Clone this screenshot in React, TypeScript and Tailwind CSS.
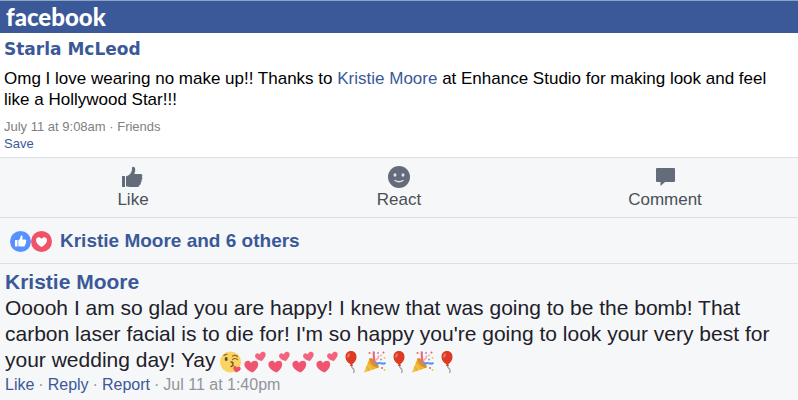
import type { ReactNode } from "react";

const actions = [
  { label: "Like", icon: LikeIcon },
  { label: "React", icon: ReactIcon },
  { label: "Comment", icon: CommentIcon },
];

const emojis = [KissEmoji, HeartsEmoji, HeartsEmoji, HeartsEmoji, HeartsEmoji, BalloonEmoji, PartyEmoji, BalloonEmoji, PartyEmoji, BalloonEmoji];

function LikeIcon() {
  return (
    <svg viewBox="0 0 22 22" className="size-[22px] fill-[#646b7b]" aria-hidden="true">
      <path d="M0 10h3v11H0z" />
      <path d="M4 10.500c4-1.500 5.500-4 6-6.500V1.500C10.500.3 13 .6 13.200 3c.1 1.800-.3 3.200-.9 5H18.500c2 0 2.400 1.700 1.300 2.900 1 1 .6 2.400-.4 2.900.7 1 .3 2.200-.7 2.700.4 1.200-.1 2.300-1.200 2.600-.1 1.200-.9 1.900-2.100 1.900H9c-2 0-3-.5-5-.8z" />
    </svg>
  );
}

function ReactIcon() {
  return (
    <svg viewBox="0 0 22 22" className="size-[22px]" aria-hidden="true">
      <circle cx="11" cy="11" r="11" fill="#646b7b" />
      <ellipse cx="7" cy="9" rx="1.500" ry="1.700" fill="#e3e5e9" />
      <ellipse cx="15" cy="9" rx="1.500" ry="1.700" fill="#e3e5e9" />
      <path d="M7 14.500q4 2.500 8 0" fill="none" stroke="#e3e5e9" strokeWidth="1.400" strokeLinecap="round" />
    </svg>
  );
}

function CommentIcon() {
  return (
    <svg viewBox="0 0 22 22" className="size-[22px] fill-[#646b7b]" aria-hidden="true">
      <path d="M3 2h17q1 0 1 1v12q0 1-1 1h-9l-4.500 4v-4H3q-1 0-1-1V3q0-1 1-1z" />
    </svg>
  );
}

function LikeBadge() {
  return (
    <svg viewBox="0 0 21 21" className="size-[21px]" aria-hidden="true">
      <circle cx="10.500" cy="10.500" r="10.500" fill="#5890ff" />
      <path d="M5 9h2.500v6.500H5zM8.300 9.300c1.300-.6 2-1.800 2.200-3.300.1-.8.4-1.500.9-1.500 1.400 0 1.500 1.800.8 3.900h3c1.300 0 1.500 1.300.7 1.900.5.600.4 1.400-.3 1.800.4.700.1 1.300-.5 1.600.1 1.200-.5 1.800-1.600 1.800H10c-.8 0-1.200-.3-1.700-.5z" fill="#fff" />
    </svg>
  );
}

function LoveBadge() {
  return (
    <svg viewBox="0 0 21 21" className="size-[21px]" aria-hidden="true">
      <circle cx="10.500" cy="10.500" r="10.500" fill="#f25268" />
      <path d="M10.500 16C7 13.800 5 11.700 5 9.200 5 6 9 5.200 10.500 8 12 5.200 16 6 16 9.200c0 2.500-2 4.600-5.500 6.800z" fill="#fff" />
    </svg>
  );
}

function Emoji({ children }: { children: ReactNode }) {
  return (
    <svg viewBox="0 0 22 22" className="mr-0.5 inline-block size-[22px] align-[-6px]" aria-hidden="true">
      {children}
    </svg>
  );
}

function KissEmoji() {
  return (
    <Emoji>
      <circle cx="10.500" cy="11" r="10.500" fill="#fbd362" />
      <ellipse cx="6.200" cy="8" rx="1.500" ry="2" fill="#5c4b2b" />
      <path d="M4 4.500q1.500-1.500 3-1M12.500 5q3-1.500 5 .5M12.500 8.500q2.500-2 5 0" fill="none" stroke="#8a6d33" strokeWidth="1.200" strokeLinecap="round" />
      <path d="M11 11q3 0 1.500 2 2 1.500-1.500 2.500" fill="none" stroke="#70572b" strokeWidth="1.400" strokeLinecap="round" />
      <path d="M16 21.500c-1.700-2-3.500-3.500-2.500-5.700 1-1.500 3-.8 3.200.7 1.500-1.500 4-1 4 1 0 2.200-2.500 3-4.700 4z" fill="#ee4c67" />
    </Emoji>
  );
}

function HeartsEmoji() {
  return (
    <Emoji>
      <path d="M8.500 21.500C4 19.500.5 17 .4 13.500c0-4 5-5 6.700-1.600 2-3.300 7.100-2.500 7.100 1.300 0 3.300-2.200 5.800-5.700 8.300z" fill="#f05470" />
      <path d="M17.800 10c-3.400-1-6.400-2.300-6.700-4.800-.3-2.800 3-3.900 4.700-1.700C16.400.3 20.700-.3 21.500 2.500c.7 2.700-1.400 5.300-3.700 7.500z" fill="#f4637c" />
    </Emoji>
  );
}

function BalloonEmoji() {
  return (
    <Emoji>
      <path d="M12 14q-1 2 1 3.500t.5 4.500" fill="none" stroke="#919aa5" strokeWidth="1.200" />
      <path d="M11 0c3.500 0 5.500 2.500 5.500 6 0 3-2 6-4.300 7.200L13 15h-3l.5-1.800C7.600 12 5.500 9 5.500 6c0-3.500 2-6 5.500-6z" fill="#dc3b25" />
      <ellipse cx="8.500" cy="4.500" rx="1.200" ry="2.200" transform="rotate(25 8.500 4.500)" fill="#ef775d" />
    </Emoji>
  );
}

function PartyEmoji() {
  return (
    <Emoji>
      <path d="M5.500 7.500 0 21.500l14.500-4.800z" fill="#f5bd38" />
      <path d="m4.200 11 5.800 7.200M2.300 15.700l3.400 4" stroke="#eda92e" strokeWidth="1.200" />
      <ellipse cx="10" cy="12" rx="2.700" ry="6.400" transform="rotate(-43 10 12)" fill="#d49133" />
      <path d="M9.500 11C11.500 7.500 8.500 4 10 .5" fill="none" stroke="#f26680" strokeWidth="2.200" />
      <path d="M11.500 13.500c3.500-4 6 1 10-1.500" fill="none" stroke="#5c95ee" strokeWidth="2.200" />
      <path d="M11 9.500q3-1 4-5" fill="none" stroke="#f99fb2" strokeWidth="1.300" />
      <g fill="#ef597b">
        <circle cx="5.500" cy="2" r="1" />
        <circle cx="19.500" cy="1.500" r="1" />
        <circle cx="18" cy="17" r="1" />
      </g>
      <g fill="#a28be8">
        <circle cx="14" cy="2" r="1" />
        <circle cx="17" cy="8.500" r="1" />
      </g>
      <g fill="#f5c34d">
        <circle cx="17" cy="4.500" r="1" />
        <circle cx="20.500" cy="7" r="1" />
        <circle cx="20.500" cy="19" r="1" />
      </g>
    </Emoji>
  );
}

export default function App() {
  return (
    <div className="min-h-screen bg-[#f6f7f9] font-['Liberation_Sans',Arial,sans-serif]">
      <header className="flex h-[33px] items-center border-t border-[#8ba4c4] bg-[#3b5998] px-1.5">
        <a href="#" className="font-[Lato,sans-serif] text-2xl leading-7 font-black text-white">
          facebook
        </a>
      </header>

      <article className="border-b border-[#dddfe2] bg-white px-1 pt-1 pb-[5px]">
        <h1 className="font-['DejaVu_Sans',sans-serif] text-[17px] leading-6 font-bold text-[#3b5998]">
          <a href="#">Starla McLeod</a>
        </h1>
        <p className="mt-[7px] text-[17px] leading-[21px] text-black">
          Omg I love wearing no make up!! Thanks to{" "}
          <a href="#" className="text-[#3b5998]">Kristie Moore</a> at Enhance Studio for making look and feel like a Hollywood Star!!!
        </p>
        <div className="mt-2 text-[13px] leading-[17px] text-[#808080]">
          July 11 at 9:08am · Friends
          <a href="#" className="block w-fit text-[#3b5998]">Save</a>
        </div>
      </article>

      <div className="grid grid-cols-3 border-b border-[#dddfe2] pt-2 pb-1.5">
        {actions.map(({ label, icon: Icon }) => (
          <button key={label} type="button" className="flex flex-col items-center gap-px text-[17px] leading-[22px] text-[#4b4f56]">
            <Icon />
            {label}
          </button>
        ))}
      </div>

      <a href="#" className="flex h-[46px] items-center border-b border-[#dddfe2] px-2.5 pt-0.5 text-[19px] font-bold text-[#3b5998]">
        <LikeBadge />
        <LoveBadge />
        <span className="ml-2">Kristie Moore and 6 others</span>
      </a>

      <section className="px-[5px] pt-[5px]">
        <h2 className="text-[21px] leading-[26px] font-bold text-[#3b5998]">
          <a href="#">Kristie Moore</a>
        </h2>
        <p className="text-[21px] leading-[26px] text-[#1d2129]">
          Ooooh I am so glad you are happy! I knew that was going to be the bomb! That carbon laser facial is to die for! I'm so happy you're going to look your very best for your wedding day! Yay
          <span className="ml-1">
            {emojis.map((Glyph, i) => (
              <Glyph key={i} />
            ))}
          </span>
        </p>
        <div className="flex gap-1 text-base leading-6 text-[#90949c]">
          <button type="button" className="text-[#3b5998]">Like</button>
          <span>·</span>
          <button type="button" className="text-[#3b5998]">Reply</button>
          <span>·</span>
          <button type="button" className="text-[#3b5998]">Report</button>
          <span>·</span>
          <span>Jul 11 at 1:40pm</span>
        </div>
      </section>
    </div>
  );
}
